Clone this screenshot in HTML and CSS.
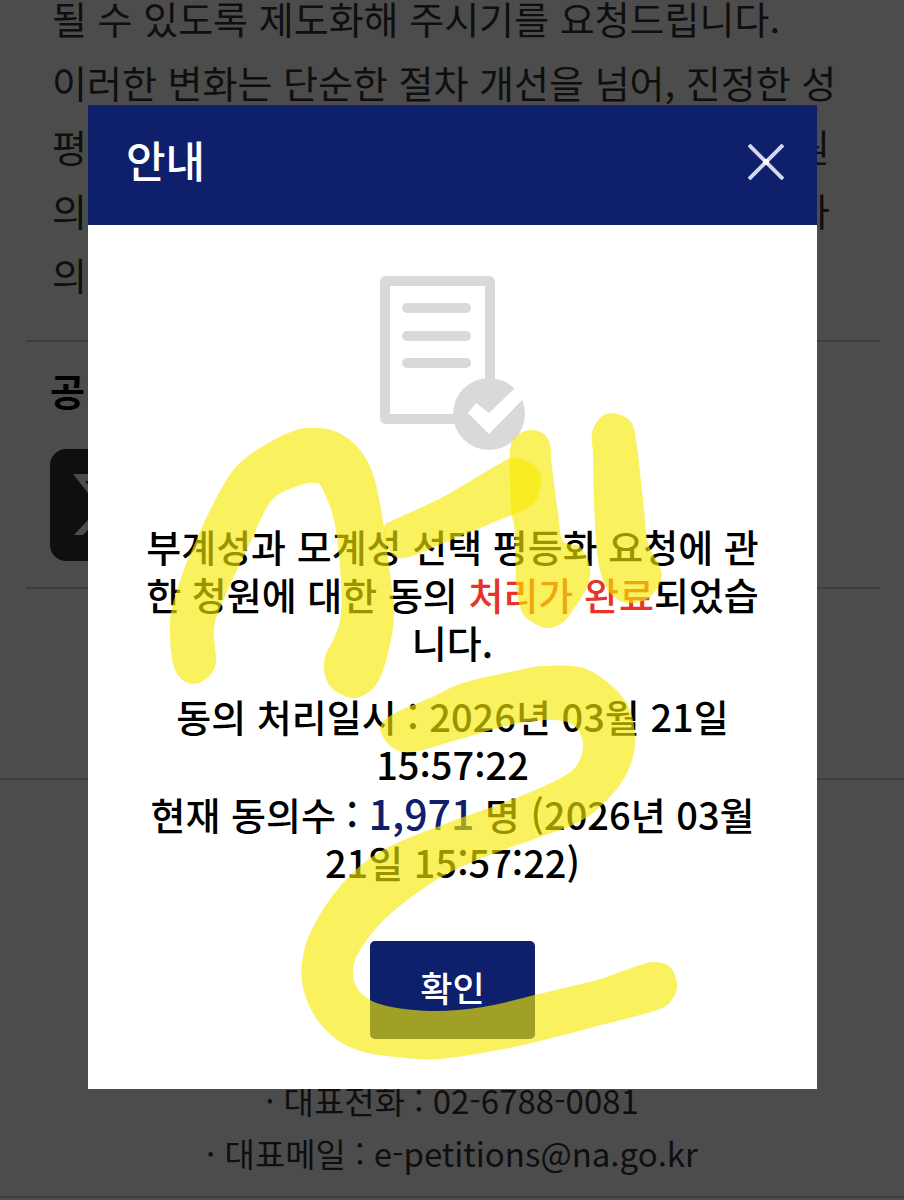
FILE: index.html
```html
<!DOCTYPE html>
<html lang="ko">
<head>
    <meta charset="UTF-8">
    <meta name="viewport" content="width=device-width, initial-scale=1">
    <title>안내</title>
    <link rel="stylesheet" href="styles.css">
</head>
<body>
    <main class="page">
        <section class="petition">
            <p>될 수 있도록 제도화해 주시기를 요청드립니다.</p>
            <p>이러한 변화는 단순한 절차 개선을 넘어, 진정한 성</p>
            <p class="line"><span>평</span><span>원</span></p>
            <p class="line"><span>의</span><span>가</span></p>
            <p>의</p>
        </section>
        <section class="share">
            <h2>공</h2>
            <a class="share-x" href="#" aria-label="X">
                <svg viewBox="0 0 112 112">
                    <path d="M23 25H42L90 86H71Z M35 32L75 80H79L39 32Z" fill="#fff" fill-rule="evenodd"/>
                    <path d="M80 25H88L62 54L58 49ZM50 58L55 63L33 86H24Z" fill="#fff"/>
                </svg>
            </a>
        </section>
        <footer class="footer">
            <p>· 대표전화 : 02-6788-0081</p>
            <p>· 대표메일 : e-petitions@na.go.kr</p>
        </footer>
    </main>

    <!-- 동의 완료 팝업 -->
    <div class="dim">
        <div class="modal" role="dialog" aria-labelledby="modal-title">
            <header class="modal-head">
                <h1 id="modal-title">안내</h1>
                <button class="close" type="button" aria-label="닫기">
                    <svg viewBox="0 0 36 36">
                        <path d="M1 1L35 35M35 1L1 35" stroke="#d3d7ee" stroke-width="4"/>
                        <circle cx="18" cy="18" r="3" fill="#fff"/>
                    </svg>
                </button>
            </header>
            <div class="modal-body">
                <svg class="doc" viewBox="0 0 147 175">
                    <rect x="6" y="6" width="105" height="138" rx="1" fill="none" stroke="#d9d9d9" stroke-width="10"/>
                    <path d="M28 33H87M28 61H87M28 88H87" stroke="#d9d9d9" stroke-width="10" stroke-linecap="round"/>
                    <circle cx="110" cy="139" r="36" fill="#d9d9d9"/>
                    <path d="M89 138L97 128L110 138L136 113L147 121L110 159Z" fill="#fff"/>
                </svg>
                <p>부계성과 모계성 선택 평등화 요청에 관한 청원에 대한 동의 <em>처리가 완료</em>되었습니다.</p>
                <p class="info">동의 처리일시 : 2026년 03월 21일 15:57:22<br>현재 동의수 : <strong>1,971</strong> 명 (2026년 03월 21일 15:57:22)</p>
                <button class="ok" type="button">확인</button>
            </div>
        </div>
    </div>

    <!-- 형광펜 낙서 -->
    <svg class="marker" viewBox="0 0 904 1200" aria-hidden="true"></svg>

    <script src="marker.js"></script>
</body>
</html>
```
FILE: styles.css
```css
* {
    box-sizing: border-box;
}
body {
    position: relative;
    margin: 0;
    background: #fff;
    color: #333;
    font-family: 'Noto Sans CJK KR', 'Noto Sans', sans-serif;
    font-feature-settings: "calt" 0;
    overflow-x: hidden;
}
h1, h2, p {
    margin: 0;
}

/* 뒤쪽 본문 */
.page {
    height: 100vh;
    overflow: hidden;
}
.petition {
    margin: -14px 24px 0 26px;
    padding: 0 26px 34px;
    border-bottom: 2px solid #ccc;
    font-size: 38px;
    line-height: 64px;
}
.line {
    display: flex;
    justify-content: space-between;
    padding-right: 24px;
}
.share {
    margin: 0 24px 0 26px;
    padding: 20px 24px 26px;
    border-bottom: 2px solid #ccc;
}
.share h2 {
    color: #000;
    font-size: 38px;
    font-weight: 700;
    line-height: 56px;
}
.share-x {
    display: block;
    width: 112px;
    height: 112px;
    margin-top: 31px;
    border-radius: 16px;
    background: #333;
}
.share-x svg {
    display: block;
}
.footer {
    margin-top: 189px;
    padding: 294px 0 16px;
    border-top: 2px solid #ccc;
    border-bottom: 2px solid #ccc;
    font-size: 33px;
    line-height: 53px;
    text-align: center;
}

/* 팝업 */
.dim {
    position: absolute;
    top: 0;
    left: 0;
    width: 100%;
    min-height: 100%;
    padding: 105px 87px 0 88px;
    background: rgba(0, 0, 0, 0.7);
}
.modal {
    background: #fff;
    color: #000;
    font-weight: 500;
}
.modal-head {
    display: flex;
    justify-content: space-between;
    align-items: center;
    height: 120px;
    padding: 0 33px 6px 38px;
    background: #0e206c;
    color: #fff;
}
.modal-head h1 {
    padding-bottom: 6px;
    font-size: 43px;
    font-weight: 500;
    line-height: 64px;
}
.close {
    width: 36px;
    height: 36px;
    padding: 0;
    border: 0;
    background: none;
    cursor: pointer;
}
.close svg {
    display: block;
}
.modal-body {
    display: flex;
    flex-direction: column;
    align-items: center;
    padding: 50px 52px;
    font-size: 38px;
    line-height: 48px;
    text-align: center;
}
.doc {
    width: 147px;
    height: 175px;
    margin-bottom: 72px;
}
.modal-body em {
    color: #e5352b;
    font-style: normal;
}
.modal-body strong {
    color: #0e206c;
    font-size: 41px;
    font-weight: 500;
}
.info {
    margin-top: 26px;
}
.ok {
    margin-top: 55px;
    padding: 19px 50px 25px;
    border: 0;
    border-radius: 5px;
    background: #0e206c;
    color: #fff;
    font-family: inherit;
    font-size: 35px;
    font-weight: 500;
    line-height: 54px;
    cursor: pointer;
}

/* 형광펜 */
.marker {
    position: absolute;
    top: 0;
    left: 0;
    width: 100%;
    fill: #f5eb00;
    pointer-events: none;
}
.marker path {
    opacity: 0.63;
}
```
FILE: marker.js
```js
// 각 획의 외곽선 좌표
const strokes = [
    [[170,623],[175,670],[195,684],[215,667],[214,630],[222,603],[250,543],[272,500],[301,485],[315,483],[322,488],[334,520],[340,567],[341,613],[335,636],[325,657],[325,675],[334,690],[355,698],[376,685],[388,653],[394,613],[389,567],[384,527],[374,477],[360,450],[339,433],[315,428],[288,433],[243,460],[219,493],[195,543],[178,587]],
    [[384,527],[398,518],[443,497],[494,467],[515,458],[536,467],[541,483],[532,505],[494,522],[446,542],[405,558],[389,550]],
    [[510,450],[516,436],[531,430],[544,434],[550,445],[552,467],[558,513],[563,541],[580,547],[590,567],[587,587],[573,610],[562,623],[547,628],[532,622],[521,610],[516,580],[515,533],[511,510],[510,480]],
    [[613,413],[600,418],[592,433],[593,455],[594,500],[597,553],[603,580],[612,595],[627,603],[647,599],[660,583],[660,567],[648,543],[643,500],[637,447],[631,422]],
    [[381,733],[383,722],[397,712],[430,698],[463,683],[510,672],[543,666],[583,668],[613,687],[630,710],[635,743],[627,773],[607,800],[577,823],[523,843],[477,860],[433,882],[387,917],[360,950],[353,973],[360,992],[383,1005],[430,1011],[483,1007],[543,993],[597,980],[640,965],[655,962],[670,967],[677,983],[673,998],[657,1010],[590,1028],[523,1045],[457,1057],[417,1059],[357,1050],[323,1027],[305,995],[302,963],[313,927],[343,883],[383,850],[450,822],[503,803],[557,780],[577,765],[583,743],[573,725],[550,720],[510,725],[457,740],[413,752],[393,748]]
];

// 점들을 지나는 부드러운 닫힌 곡선
function smooth(pts) {
    const n = pts.length;
    let d = `M${pts[0]}`;
    for (let i = 0; i < n; i++) {
        const a = pts[(i - 1 + n) % n], b = pts[i];
        const c = pts[(i + 1) % n], e = pts[(i + 2) % n];
        d += `C${b[0] + (c[0] - a[0]) / 6} ${b[1] + (c[1] - a[1]) / 6}`;
        d += ` ${c[0] - (e[0] - b[0]) / 6} ${c[1] - (e[1] - b[1]) / 6} ${c}`;
    }
    return d + 'Z';
}

const svg = document.querySelector('.marker');
strokes.forEach(pts => {
    const path = document.createElementNS('http://www.w3.org/2000/svg', 'path');
    path.setAttribute('d', smooth(pts));
    svg.appendChild(path);
});
```
